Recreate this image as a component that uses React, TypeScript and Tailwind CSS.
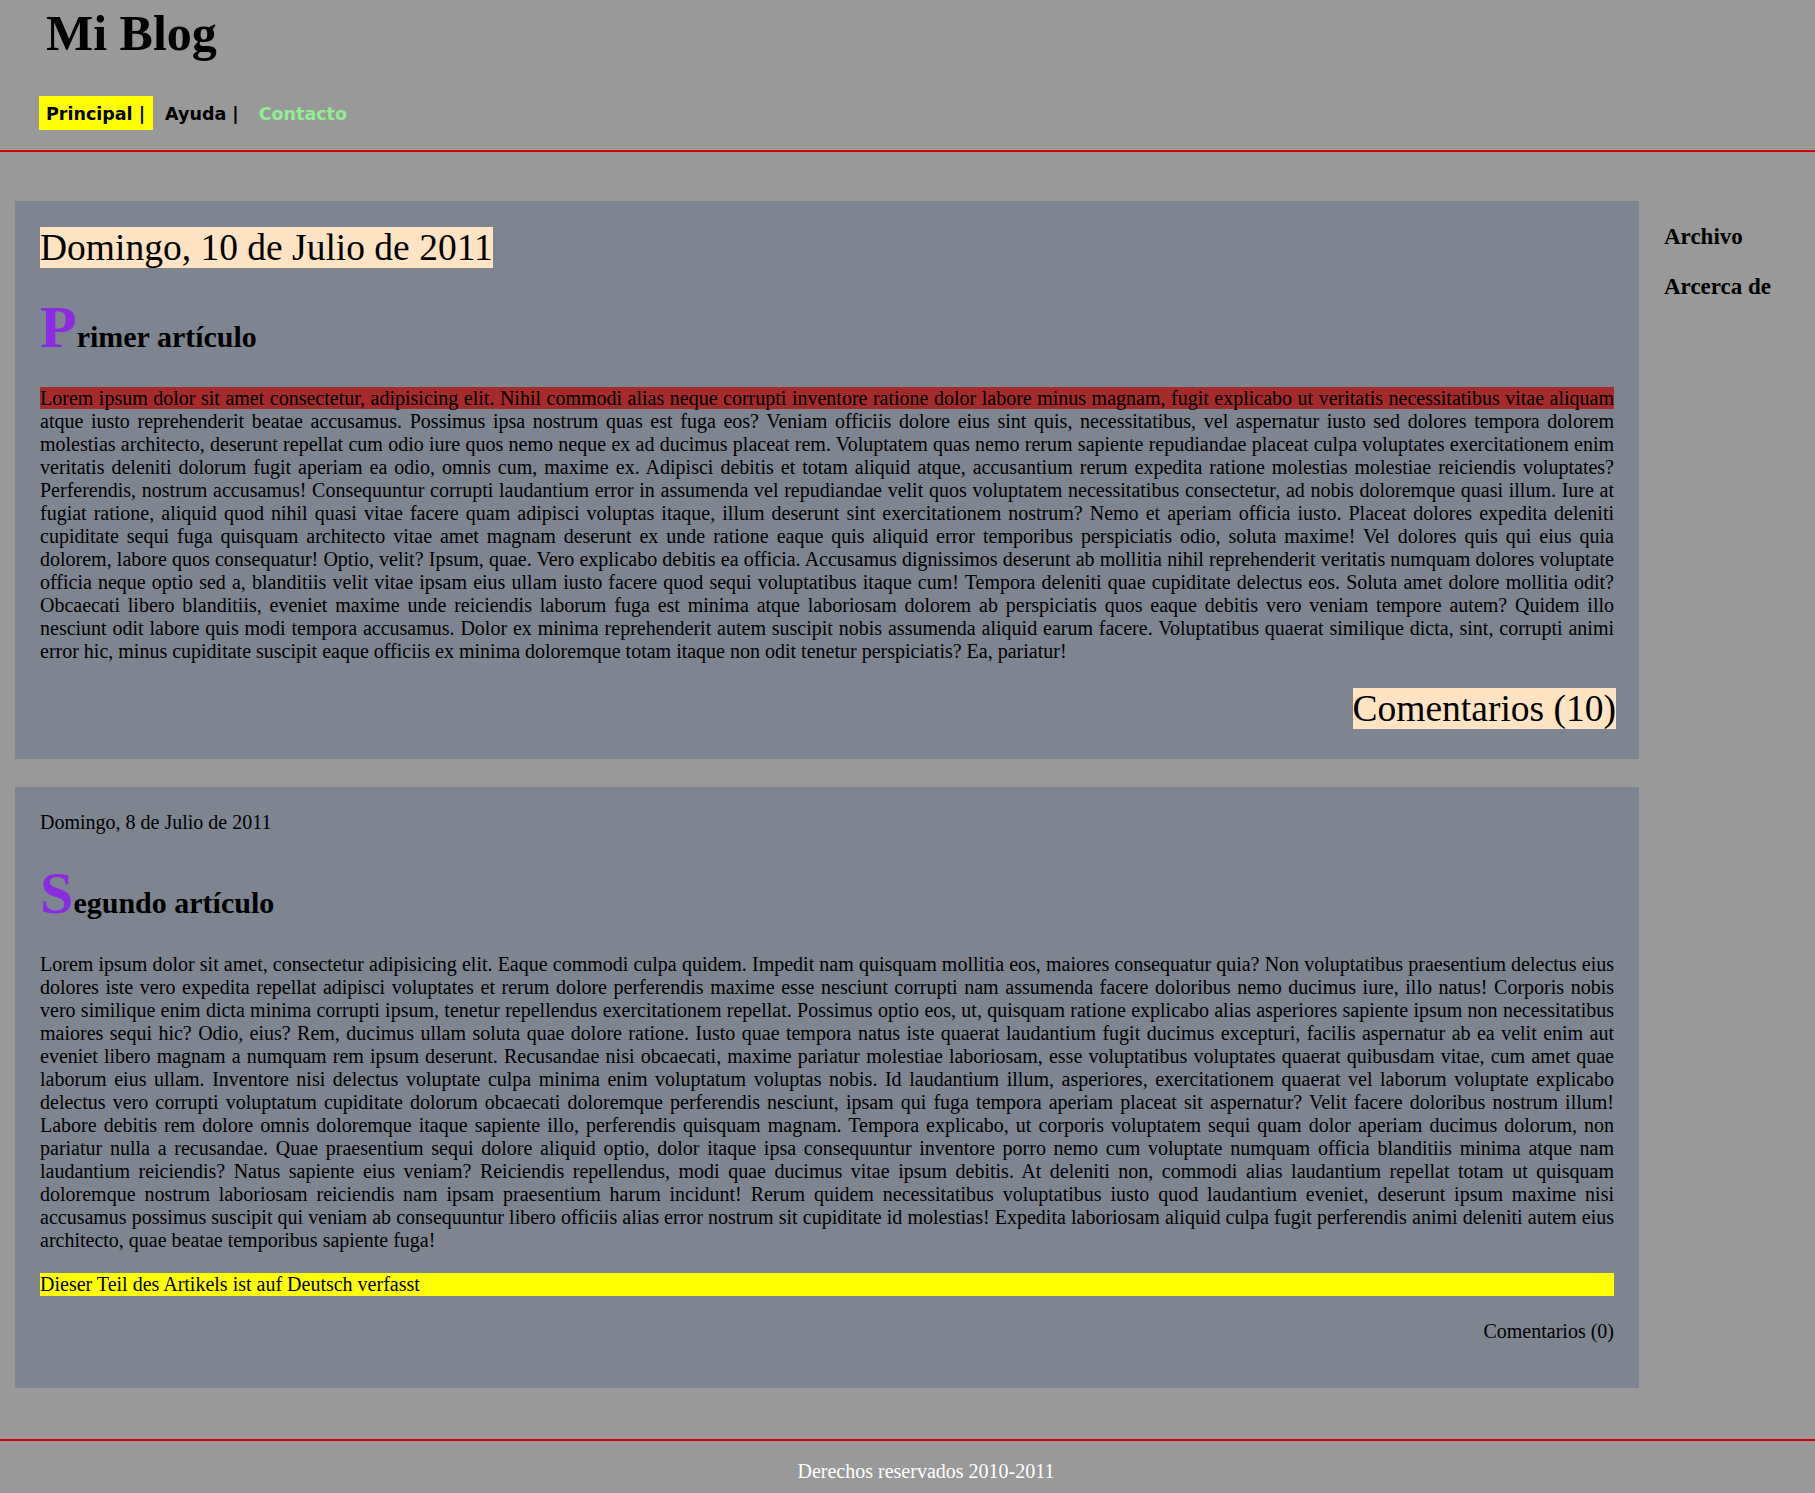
const P1_LINES = [
  "Lorem ipsum dolor sit amet consectetur, adipisicing elit. Nihil commodi alias neque corrupti inventore ratione dolor labore minus magnam, fugit explicabo ut veritatis necessitatibus vitae aliquam",
  "atque iusto reprehenderit beatae accusamus. Possimus ipsa nostrum quas est fuga eos? Veniam officiis dolore eius sint quis, necessitatibus, vel aspernatur iusto sed dolores tempora dolorem",
  "molestias architecto, deserunt repellat cum odio iure quos nemo neque ex ad ducimus placeat rem. Voluptatem quas nemo rerum sapiente repudiandae placeat culpa voluptates exercitationem enim",
  "veritatis deleniti dolorum fugit aperiam ea odio, omnis cum, maxime ex. Adipisci debitis et totam aliquid atque, accusantium rerum expedita ratione molestias molestiae reiciendis voluptates?",
  "Perferendis, nostrum accusamus! Consequuntur corrupti laudantium error in assumenda vel repudiandae velit quos voluptatem necessitatibus consectetur, ad nobis doloremque quasi illum. Iure at",
  "fugiat ratione, aliquid quod nihil quasi vitae facere quam adipisci voluptas itaque, illum deserunt sint exercitationem nostrum? Nemo et aperiam officia iusto. Placeat dolores expedita deleniti",
  "cupiditate sequi fuga quisquam architecto vitae amet magnam deserunt ex unde ratione eaque quis aliquid error temporibus perspiciatis odio, soluta maxime! Vel dolores quis qui eius quia",
  "dolorem, labore quos consequatur! Optio, velit? Ipsum, quae. Vero explicabo debitis ea officia. Accusamus dignissimos deserunt ab mollitia nihil reprehenderit veritatis numquam dolores voluptate",
  "officia neque optio sed a, blanditiis velit vitae ipsam eius ullam iusto facere quod sequi voluptatibus itaque cum! Tempora deleniti quae cupiditate delectus eos. Soluta amet dolore mollitia odit?",
  "Obcaecati libero blanditiis, eveniet maxime unde reiciendis laborum fuga est minima atque laboriosam dolorem ab perspiciatis quos eaque debitis vero veniam tempore autem? Quidem illo",
  "nesciunt odit labore quis modi tempora accusamus. Dolor ex minima reprehenderit autem suscipit nobis assumenda aliquid earum facere. Voluptatibus quaerat similique dicta, sint, corrupti animi",
  "error hic, minus cupiditate suscipit eaque officiis ex minima doloremque totam itaque non odit tenetur perspiciatis? Ea, pariatur!",
];

const P2 =
  "Lorem ipsum dolor sit amet, consectetur adipisicing elit. Eaque commodi culpa quidem. Impedit nam quisquam mollitia eos, maiores consequatur quia? Non voluptatibus praesentium delectus eius dolores iste vero expedita repellat adipisci voluptates et rerum dolore perferendis maxime esse nesciunt corrupti nam assumenda facere doloribus nemo ducimus iure, illo natus! Corporis nobis vero similique enim dicta minima corrupti ipsum, tenetur repellendus exercitationem repellat. Possimus optio eos, ut, quisquam ratione explicabo alias asperiores sapiente ipsum non necessitatibus maiores sequi hic? Odio, eius? Rem, ducimus ullam soluta quae dolore ratione. Iusto quae tempora natus iste quaerat laudantium fugit ducimus excepturi, facilis aspernatur ab ea velit enim aut eveniet libero magnam a numquam rem ipsum deserunt. Recusandae nisi obcaecati, maxime pariatur molestiae laboriosam, esse voluptatibus voluptates quaerat quibusdam vitae, cum amet quae laborum eius ullam. Inventore nisi delectus voluptate culpa minima enim voluptatum voluptas nobis. Id laudantium illum, asperiores, exercitationem quaerat vel laborum voluptate explicabo delectus vero corrupti voluptatum cupiditate dolorum obcaecati doloremque perferendis nesciunt, ipsam qui fuga tempora aperiam placeat sit aspernatur? Velit facere doloribus nostrum illum! Labore debitis rem dolore omnis doloremque itaque sapiente illo, perferendis quisquam magnam. Tempora explicabo, ut corporis voluptatem sequi quam dolor aperiam ducimus dolorum, non pariatur nulla a recusandae. Quae praesentium sequi dolore aliquid optio, dolor itaque ipsa consequuntur inventore porro nemo cum voluptate numquam officia blanditiis minima atque nam laudantium reiciendis? Natus sapiente eius veniam? Reiciendis repellendus, modi quae ducimus vitae ipsum debitis. At deleniti non, commodi alias laudantium repellat totam ut quisquam doloremque nostrum laboriosam reiciendis nam ipsam praesentium harum incidunt! Rerum quidem necessitatibus voluptatibus iusto quod laudantium eveniet, deserunt ipsum maxime nisi accusamus possimus suscipit qui veniam ab consequuntur libero officiis alias error nostrum sit cupiditate id molestias! Expedita laboriosam aliquid culpa fugit perferendis animi deleniti autem eius architecto, quae beatae temporibus sapiente fuga!";

export default function App() {
  return (
    <div className="min-h-[1493px] bg-[#999999] font-['Liberation_Serif','Times_New_Roman',serif] text-black">
      <header className="border-b-2 border-[#d40000] pb-[20px]">
        <h1 className="ml-[46px] pt-[5px] text-[50px] font-bold leading-[57px]">Mi Blog</h1>
        <nav className="ml-[39px] mt-[34px] flex gap-[5px] font-['DejaVu_Sans','Verdana',sans-serif] text-[17.5px] font-bold">
          <a className="flex h-[34px] items-center bg-[#ffff00] pl-[7px] pr-[8px] pt-[2px] text-black">Principal |</a>
          <a className="flex h-[34px] items-center pl-[7px] pr-[8px] pt-[2px] text-black">Ayuda |</a>
          <a className="flex h-[34px] items-center pl-[7px] pr-[8px] pt-[2px] text-[#90ee90]">Contacto</a>
        </nav>
      </header>

      <div className="mt-[49px] flex">
        <main className="ml-[15px] flex w-[1624px] shrink-0 flex-col gap-[28px]">
          <article className="bg-[#7e8490] px-[25px] pb-[29px] pt-[25px]">
            <div className="text-[37.5px] leading-[43px]">
              <span className="bg-[#ffe4c4]">Domingo, 10 de Julio de 2011</span>
            </div>
            <h2 className="mt-[28px] text-[30px] font-bold leading-none first-letter:text-[60px] first-letter:leading-none first-letter:text-[#8a2be2]">
              Primer artículo
            </h2>
            <p className="mt-[30px] text-justify text-[20px] leading-[23px]">
              {P1_LINES.map((line, i) => {
                const last = i === P1_LINES.length - 1;
                return (
                  <span
                    key={i}
                    className={last ? "block text-justify" : "block text-justify [text-align-last:justify]"}
                  >
                    {i === 0 ? <span className="bg-[#a52a2a]">{line}</span> : line}{" "}
                  </span>
                );
              })}
            </p>
            <div className="-mr-[2px] mt-[24px] text-right text-[37.5px] leading-[43px]">
              <span className="bg-[#ffe4c4]">Comentarios (10)</span>
            </div>
          </article>

          <article className="bg-[#7e8490] px-[25px] pb-[45px] pt-[24px]">
            <div className="text-[20px] leading-[23px]">Domingo, 8 de Julio de 2011</div>
            <h2 className="mt-[29px] text-[30px] font-bold leading-none first-letter:text-[60px] first-letter:leading-none first-letter:text-[#8a2be2]">
              Segundo artículo
            </h2>
            <p className="mt-[30px] text-justify text-[20px] leading-[23px]">{P2}</p>
            <p className="mt-[21px] bg-[#ffff00] text-[20px] leading-[23px]">Dieser Teil des Artikels ist auf Deutsch verfasst</p>
            <div className="mt-[24px] text-right text-[20px] leading-[23px]">Comentarios (0)</div>
          </article>
        </main>

        <aside className="ml-[25px] mt-[23px] flex flex-col gap-[24px] text-[23px] font-bold leading-[26px]">
          <div>Archivo</div>
          <div>Arcerca de</div>
        </aside>
      </div>

      <footer className="mt-[51px] border-t-2 border-[#d40000] pb-[10px] pl-[37px] pt-[19px] text-center text-[20px] leading-[23px] text-white">
        Derechos reservados 2010-2011
      </footer>
    </div>
  );
}
